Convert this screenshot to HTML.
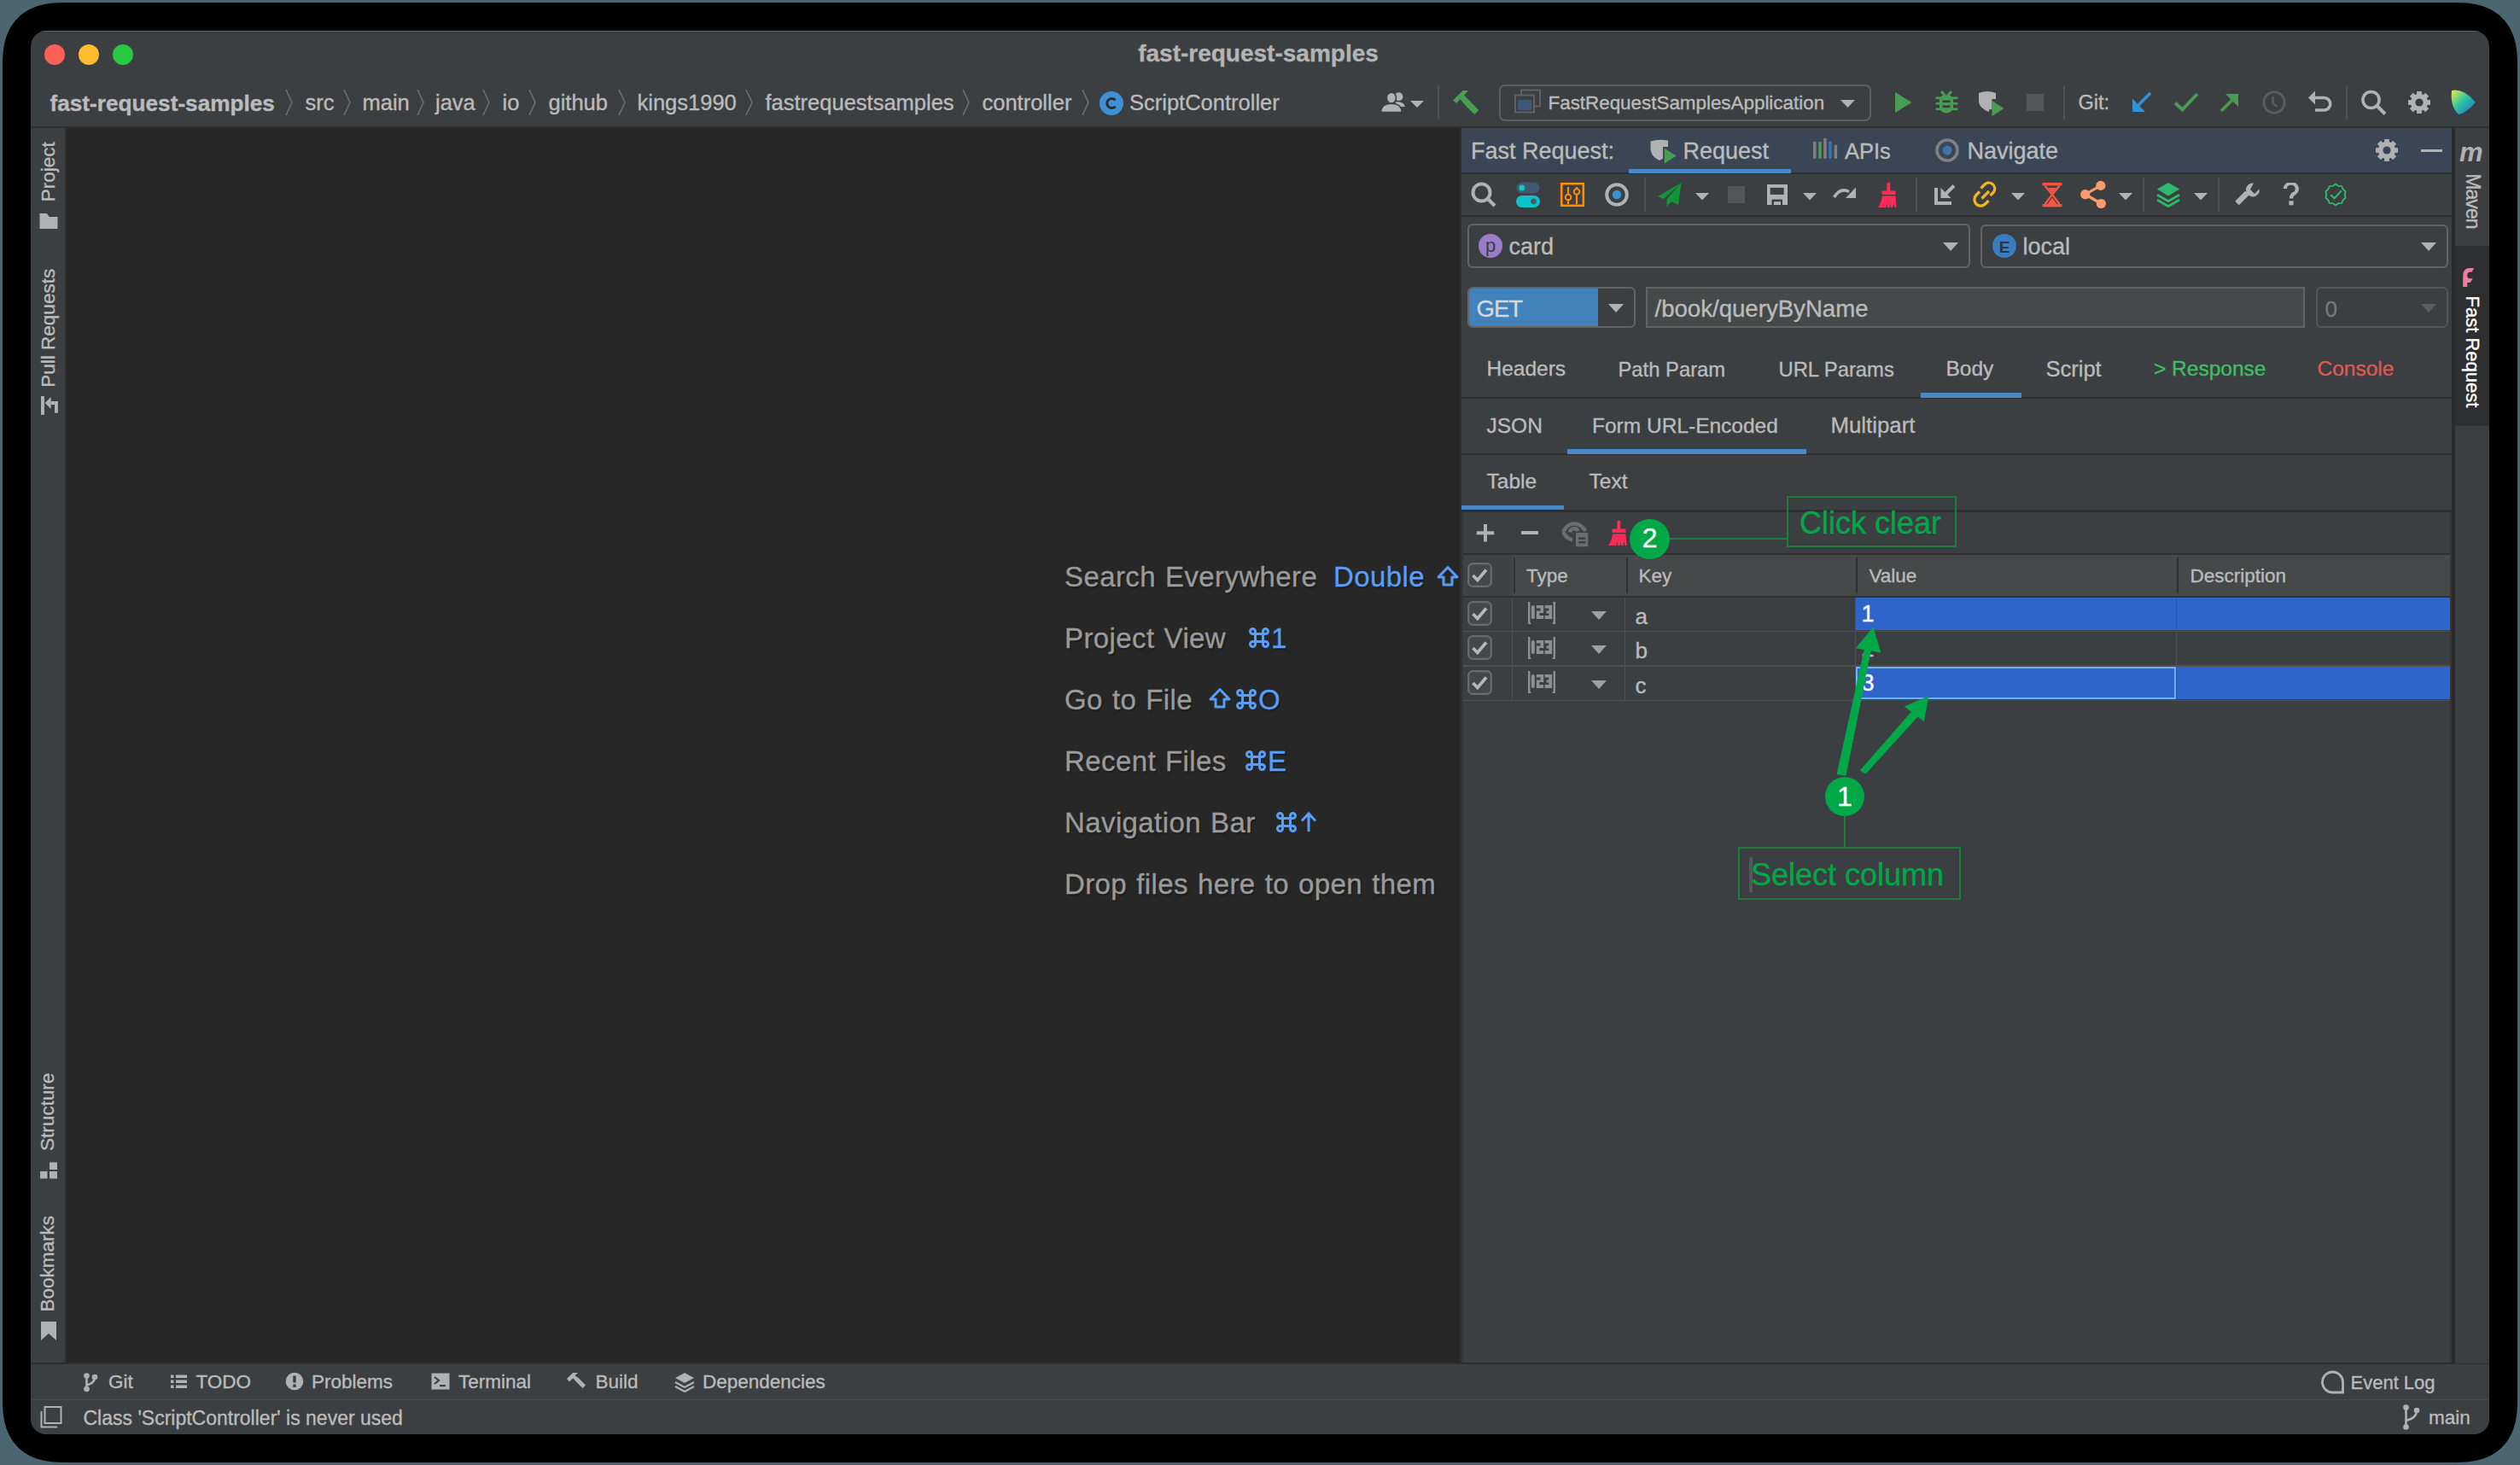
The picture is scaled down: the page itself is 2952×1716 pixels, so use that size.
<!DOCTYPE html>
<html><head><meta charset="utf-8"><style>
html,body{margin:0;padding:0;}
body{width:2952px;height:1716px;position:relative;overflow:hidden;background:#4b6670;font-family:"Liberation Sans", sans-serif;}
.r{position:absolute;display:block;}
.t{position:absolute;line-height:1;white-space:pre;font-family:"Liberation Sans", sans-serif;-webkit-text-stroke:0.35px currentColor;}
</style></head><body>
<svg class="r" style="left:0;top:0" width="2952" height="1716" viewBox="0 0 2952 1716"><path d="M2875.00 3.00 L2883.35 3.13 L2889.51 3.51 L2895.02 4.14 L2900.10 5.02 L2904.85 6.16 L2909.32 7.54 L2913.53 9.17 L2917.50 11.04 L2921.24 13.16 L2924.75 15.51 L2928.03 18.10 L2931.08 20.92 L2933.90 23.97 L2936.49 27.25 L2938.84 30.76 L2940.96 34.50 L2942.83 38.47 L2944.46 42.68 L2945.84 47.15 L2946.98 51.90 L2947.86 56.98 L2948.49 62.49 L2948.87 68.65 L2949.00 77.00 L2949.00 1639.00 L2948.87 1647.35 L2948.49 1653.51 L2947.86 1659.02 L2946.98 1664.10 L2945.84 1668.85 L2944.46 1673.32 L2942.83 1677.53 L2940.96 1681.50 L2938.84 1685.24 L2936.49 1688.75 L2933.90 1692.03 L2931.08 1695.08 L2928.03 1697.90 L2924.75 1700.49 L2921.24 1702.84 L2917.50 1704.96 L2913.53 1706.83 L2909.32 1708.46 L2904.85 1709.84 L2900.10 1710.98 L2895.02 1711.86 L2889.51 1712.49 L2883.35 1712.87 L2875.00 1713.00 L77.00 1713.00 L68.65 1712.87 L62.49 1712.49 L56.98 1711.86 L51.90 1710.98 L47.15 1709.84 L42.68 1708.46 L38.47 1706.83 L34.50 1704.96 L30.76 1702.84 L27.25 1700.49 L23.97 1697.90 L20.92 1695.08 L18.10 1692.03 L15.51 1688.75 L13.16 1685.24 L11.04 1681.50 L9.17 1677.53 L7.54 1673.32 L6.16 1668.85 L5.02 1664.10 L4.14 1659.02 L3.51 1653.51 L3.13 1647.35 L3.00 1639.00 L3.00 77.00 L3.13 68.65 L3.51 62.49 L4.14 56.98 L5.02 51.90 L6.16 47.15 L7.54 42.68 L9.17 38.47 L11.04 34.50 L13.16 30.76 L15.51 27.25 L18.10 23.97 L20.92 20.92 L23.97 18.10 L27.25 15.51 L30.76 13.16 L34.50 11.04 L38.47 9.17 L42.68 7.54 L47.15 6.16 L51.90 5.02 L56.98 4.14 L62.49 3.51 L68.65 3.13 L77.00 3.00Z" fill="#000"/></svg>
<div class="r" style="left:0;top:0;width:2952px;height:1716px;clip-path:inset(36px 36px 36px 36px round 18px)">
<div class="r" style="left:36.0px;top:36.0px;width:2880.0px;height:1644.0px;background:#3c3f41;border-radius:18px;overflow:hidden"></div>
<div class="r" style="left:36.0px;top:36.0px;width:2880.0px;height:1.2px;background:#5d5f61;border-radius:18px 18px 0 0"></div>
<div class="r" style="left:52.0px;top:52.0px;width:24.0px;height:24.0px;background:#ff5f57;border-radius:50%"></div>
<div class="r" style="left:92.0px;top:52.0px;width:24.0px;height:24.0px;background:#febc2e;border-radius:50%"></div>
<div class="r" style="left:132.0px;top:52.0px;width:24.0px;height:24.0px;background:#28c840;border-radius:50%"></div>
<div class="t" style="left:1174px;top:48.6px;width:600px;text-align:center;font-size:28px;font-weight:700;color:#b4b4b4">fast-request-samples</div>
<div class="t" style="left:58.5px;top:107.5px;font-size:26.2px;color:#bbbbbb;font-weight:700;">fast-request-samples</div>
<div class="t" style="left:357.5px;top:108.1px;font-size:25.5px;color:#bbbbbb;font-weight:400;">src</div>
<div class="t" style="left:424.5px;top:108.1px;font-size:25.5px;color:#bbbbbb;font-weight:400;">main</div>
<div class="t" style="left:510.0px;top:108.1px;font-size:25.5px;color:#bbbbbb;font-weight:400;">java</div>
<div class="t" style="left:588.5px;top:108.1px;font-size:25.5px;color:#bbbbbb;font-weight:400;">io</div>
<div class="t" style="left:642.5px;top:108.1px;font-size:25.5px;color:#bbbbbb;font-weight:400;">github</div>
<div class="t" style="left:746.5px;top:108.1px;font-size:25.5px;color:#bbbbbb;font-weight:400;">kings1990</div>
<div class="t" style="left:896.5px;top:108.1px;font-size:25.5px;color:#bbbbbb;font-weight:400;">fastrequestsamples</div>
<div class="t" style="left:1150.5px;top:108.1px;font-size:25.5px;color:#bbbbbb;font-weight:400;">controller</div>
<div class="t" style="left:1323.0px;top:108.1px;font-size:25.5px;color:#bbbbbb;font-weight:400;">ScriptController</div>
<svg class="r" style="left:333px;top:104px;" width="12" height="32" viewBox="0 0 12 32"><path d="M2 1 L9 16 L2 31" stroke="#6c6e70" stroke-width="1.6" fill="none"/></svg>
<svg class="r" style="left:401px;top:104px;" width="12" height="32" viewBox="0 0 12 32"><path d="M2 1 L9 16 L2 31" stroke="#6c6e70" stroke-width="1.6" fill="none"/></svg>
<svg class="r" style="left:487px;top:104px;" width="12" height="32" viewBox="0 0 12 32"><path d="M2 1 L9 16 L2 31" stroke="#6c6e70" stroke-width="1.6" fill="none"/></svg>
<svg class="r" style="left:564px;top:104px;" width="12" height="32" viewBox="0 0 12 32"><path d="M2 1 L9 16 L2 31" stroke="#6c6e70" stroke-width="1.6" fill="none"/></svg>
<svg class="r" style="left:618px;top:104px;" width="12" height="32" viewBox="0 0 12 32"><path d="M2 1 L9 16 L2 31" stroke="#6c6e70" stroke-width="1.6" fill="none"/></svg>
<svg class="r" style="left:723px;top:104px;" width="12" height="32" viewBox="0 0 12 32"><path d="M2 1 L9 16 L2 31" stroke="#6c6e70" stroke-width="1.6" fill="none"/></svg>
<svg class="r" style="left:872px;top:104px;" width="12" height="32" viewBox="0 0 12 32"><path d="M2 1 L9 16 L2 31" stroke="#6c6e70" stroke-width="1.6" fill="none"/></svg>
<svg class="r" style="left:1126px;top:104px;" width="12" height="32" viewBox="0 0 12 32"><path d="M2 1 L9 16 L2 31" stroke="#6c6e70" stroke-width="1.6" fill="none"/></svg>
<svg class="r" style="left:1266px;top:104px;" width="12" height="32" viewBox="0 0 12 32"><path d="M2 1 L9 16 L2 31" stroke="#6c6e70" stroke-width="1.6" fill="none"/></svg>
<svg class="r" style="left:1287px;top:106px;" width="30" height="30" viewBox="0 0 30 30"><circle cx="15" cy="15" r="14" fill="#3f8fd2"/><path d="M19.5 11.2 A5.6 5.6 0 1 0 19.5 18.8" stroke="#2b2b2b" stroke-width="3" fill="none"/></svg>
<div class="r" style="left:36.0px;top:147.9px;width:2880.0px;height:2.2px;background:#303030;"></div>
<svg class="r" style="left:1616px;top:104px;" width="32" height="30" viewBox="0 0 32 30"><g fill="#afb1b3"><circle cx="22.5" cy="9.2" r="4.9"/><path d="M18 15.5 Q28.5 14.5 30 21 H22Z"/></g><g fill="#afb1b3" stroke="#3c3f41" stroke-width="1.6"><ellipse cx="13.9" cy="10.6" rx="5.6" ry="6.5"/><path d="M1.6 27.5 Q1.6 17.8 13.9 17.3 Q26.2 17.8 26.2 27.5Z"/></g></svg>
<svg class="r" style="left:1652.0px;top:118.0px" width="16" height="8" viewBox="0 0 16 8"><path d="M0 0H16L8.0 8Z" fill="#afb1b3"/></svg>
<div class="r" style="left:1684.0px;top:100.0px;width:2.0px;height:39.0px;background:#4f5254;"></div>
<svg class="r" style="left:1700px;top:104px;" width="34" height="32" viewBox="0 0 34 32"><path d="M2 13.4 L13.6 2 L20 2.2 L15.2 7.4 L21.8 14.3 L32.3 25.1 L27.3 30 L17.3 20.2 L10.4 12 L6.3 17 Z" fill="#499c54"/></svg>
<div class="r" style="left:1756.0px;top:98.6px;width:436.0px;height:43.0px;background:transparent;border:2px solid #5e6163;border-radius:7px;box-sizing:border-box"></div>
<svg class="r" style="left:1774px;top:104px;" width="32" height="30" viewBox="0 0 32 30"><rect x="8" y="1.5" width="22" height="19" fill="none" stroke="#5f6163" stroke-width="2"/><rect x="1" y="7.5" width="22" height="20" fill="#3c3f41" stroke="#5f6163" stroke-width="2"/><rect x="4" y="13" width="16" height="12" fill="#40577a"/></svg>
<div class="t" style="left:1813.5px;top:110.2px;font-size:22.4px;color:#bbbbbb;font-weight:400;">FastRequestSamplesApplication</div>
<svg class="r" style="left:2155.5px;top:116.5px" width="17" height="9" viewBox="0 0 17 9"><path d="M0 0H17L8.5 9Z" fill="#afb1b3"/></svg>
<svg class="r" style="left:2218px;top:106px;" width="24" height="28" viewBox="0 0 24 28"><path d="M2 2 V26 L21.5 14Z" fill="#499c54"/></svg>
<svg class="r" style="left:2266px;top:104px;" width="28" height="32" viewBox="0 0 28 32"><path d="M8 3 L12 7.5 M20 3 L16 7.5" stroke="#499c54" stroke-width="3.2"/><path d="M6 10 Q14 4 22 10 V24 Q14 33 6 24Z" fill="#499c54"/><rect x="1.5" y="9.5" width="26" height="2.6" fill="#499c54"/><rect x="1.5" y="16" width="26" height="2.6" fill="#499c54"/><rect x="1.5" y="22.5" width="26" height="2.6" fill="#499c54"/><rect x="9.5" y="13.5" width="9" height="2.6" fill="#3c3f41"/><rect x="9.5" y="19.5" width="9" height="2.6" fill="#3c3f41"/></svg>
<svg class="r" style="left:2316px;top:106px;" width="34" height="32" viewBox="0 0 34 32"><path d="M2 3 Q12 -1 22 3 V10 H17.5 V21 Q17 23 14 22 V25 Q10 24 8 22 Q2 18 2 12Z" fill="#afb1b3"/><path d="M17.5 12 V30 L31.5 21Z" fill="#499c54"/></svg>
<div class="r" style="left:2374.0px;top:110.0px;width:20.0px;height:20.0px;background:#545658;"></div>
<div class="r" style="left:2416.5px;top:101.0px;width:2.0px;height:39.0px;background:#4f5254;"></div>
<div class="t" style="left:2434.5px;top:109.3px;font-size:23.5px;color:#bbbbbb;font-weight:400;">Git:</div>
<svg class="r" style="left:2495px;top:106px;" width="28" height="28" viewBox="0 0 28 28"><path d="M24 3 L5 22" stroke="#3592d4" stroke-width="3.6"/><path d="M3 9.5 V25 H18 Z" fill="#3592d4"/></svg>
<svg class="r" style="left:2545px;top:106px;" width="32" height="26" viewBox="0 0 32 26"><path d="M3 14.5 L11.5 22.5 L29 4" stroke="#499c54" stroke-width="4" fill="none"/></svg>
<svg class="r" style="left:2598px;top:106px;" width="28" height="28" viewBox="0 0 28 28"><path d="M4 24 L22 6" stroke="#499c54" stroke-width="3.6"/><path d="M24 4 V19 L9 4Z" fill="#499c54"/></svg>
<svg class="r" style="left:2649px;top:105px;" width="30" height="30" viewBox="0 0 30 30"><circle cx="15" cy="15" r="12.2" stroke="#5a5c5e" stroke-width="3" fill="none"/><path d="M13.5 8 V16 L18.5 20" stroke="#5a5c5e" stroke-width="2.6" fill="none"/></svg>
<svg class="r" style="left:2702px;top:105px;" width="32" height="30" viewBox="0 0 32 30"><path d="M2 9.5 L10 1.5 V17.5Z" fill="#afb1b3"/><path d="M9 9.5 H20.5 A7.2 7.2 0 0 1 20.5 24 H10" stroke="#afb1b3" stroke-width="3.6" fill="none"/></svg>
<div class="r" style="left:2748.0px;top:101.0px;width:2.0px;height:39.0px;background:#4f5254;"></div>
<svg class="r" style="left:2764px;top:104px;" width="34" height="32" viewBox="0 0 34 32"><circle cx="13.5" cy="13" r="9.6" stroke="#afb1b3" stroke-width="3.5" fill="none"/><path d="M20.5 20 L30 29.5" stroke="#afb1b3" stroke-width="4" /></svg>
<svg class="r" style="left:2818px;top:104px;" width="32" height="32" viewBox="0 0 32 32"><circle cx="16" cy="16" r="10.14" fill="#afb1b3"/><rect x="13.14" y="3" width="5.72" height="26" fill="#afb1b3" transform="rotate(0 16 16)"/><rect x="13.14" y="3" width="5.72" height="26" fill="#afb1b3" transform="rotate(45 16 16)"/><rect x="13.14" y="3" width="5.72" height="26" fill="#afb1b3" transform="rotate(90 16 16)"/><rect x="13.14" y="3" width="5.72" height="26" fill="#afb1b3" transform="rotate(135 16 16)"/><circle cx="16" cy="16" r="4.6" fill="#3c3f41"/></svg>
<svg class="r" style="left:2868px;top:103px;" width="36" height="34" viewBox="0 0 36 34"><defs><linearGradient id="lg" x1="0" y1="0" x2="1" y2="1"><stop offset="0" stop-color="#e9f04a"/><stop offset="0.45" stop-color="#2fc6a0"/><stop offset="1" stop-color="#1f5fd9"/></linearGradient></defs><path d="M4 3 Q18 0 32 17 Q20 30 12 31 Q2 22 4 3Z" fill="url(#lg)"/></svg>
<div class="r" style="left:36.0px;top:149.5px;width:40.5px;height:1447.0px;background:#3c3f41;"></div>
<div class="r" style="left:76.0px;top:149.5px;width:2.2px;height:1447.0px;background:#2f2f2f;"></div>
<div class="r" style="left:78.2px;top:150.0px;width:1632.0px;height:1446.0px;background:#272727;"></div>
<div class="t" style="left:16.5px;top:189.6px;width:80px;height:22.5px;text-align:center;font-size:22.5px;color:#bbbbbb;font-weight:400;transform:rotate(-90deg);transform-origin:50% 50%">Project</div>
<div class="t" style="left:-18.5px;top:372.6px;width:150px;height:22.5px;text-align:center;font-size:22.5px;color:#bbbbbb;font-weight:400;transform:rotate(-90deg);transform-origin:50% 50%">Pull Requests</div>
<div class="t" style="left:1.0px;top:1290.7px;width:110px;height:22.5px;text-align:center;font-size:22.5px;color:#bbbbbb;font-weight:400;transform:rotate(-90deg);transform-origin:50% 50%">Structure</div>
<div class="t" style="left:-9.0px;top:1468.5px;width:130px;height:22.5px;text-align:center;font-size:22.5px;color:#bbbbbb;font-weight:400;transform:rotate(-90deg);transform-origin:50% 50%">Bookmarks</div>
<svg class="r" style="left:45px;top:249px;" width="24" height="20" viewBox="0 0 24 20"><path d="M1.5 1 H10 L12.5 5 H22.5 V19 H1.5Z" fill="#afb1b3"/></svg>
<svg class="r" style="left:45px;top:462px;" width="26" height="26" viewBox="0 0 26 26"><g fill="#afb1b3"><rect x="3" y="2" width="3.9" height="21.9"/><path d="M7.5 9.9 L14.7 3 V16.9Z"/><path d="M14.7 8 H22.9 V21.8 H19 V12.1 H14.7Z"/></g></svg>
<svg class="r" style="left:45px;top:1359px;" width="24" height="24" viewBox="0 0 24 24"><rect x="2" y="13" width="8.5" height="8.5" fill="#afb1b3"/><rect x="13" y="2.5" width="9" height="8.5" fill="#afb1b3"/><rect x="13" y="13" width="9" height="8.5" fill="#afb1b3"/></svg>
<svg class="r" style="left:45px;top:1546px;" width="24" height="26" viewBox="0 0 24 26"><path d="M3 2 H21 V24 L12 16 L3 24Z" fill="#afb1b3"/></svg>
<div class="t" style="left:1247.0px;top:659.4px;font-size:33px;color:#9a9a9a;font-weight:400;text-shadow:1.5px 1.5px 1px #1c1c1c;letter-spacing:0.4px;word-spacing:1.5px">Search Everywhere</div>
<div class="t" style="left:1562.0px;top:659.4px;font-size:33px;color:#589df6;font-weight:400;text-shadow:1.5px 1.5px 1px #1c1c1c;letter-spacing:0.4px;word-spacing:1.5px">Double</div>
<svg class="r" style="left:1682px;top:662px;" width="28" height="26" viewBox="0 0 28 26"><path d="M14 2.5 L25 14 H19 V23 H9 V14 H3Z" stroke="#589df6" stroke-width="3" fill="none" stroke-linejoin="round"/></svg>
<div class="t" style="left:1247.0px;top:730.7px;font-size:33px;color:#9a9a9a;font-weight:400;text-shadow:1.5px 1.5px 1px #1c1c1c;letter-spacing:0.4px;word-spacing:1.5px">Project View</div>
<svg class="r" style="left:1462px;top:734px;" width="26" height="26" viewBox="0 0 26 26"><g stroke="#589df6" stroke-width="3" fill="none"><path d="M8.5 8.5 H17.5 V17.5 H8.5Z"/><path d="M8.5 8.5 H5.5 A3 3 0 1 1 8.5 5.5 Z"/><path d="M17.5 8.5 V5.5 A3 3 0 1 1 20.5 8.5Z"/><path d="M17.5 17.5 H20.5 A3 3 0 1 1 17.5 20.5Z"/><path d="M8.5 17.5 V20.5 A3 3 0 1 1 5.5 17.5Z"/></g></svg>
<div class="t" style="left:1489.0px;top:730.7px;font-size:33px;color:#589df6;font-weight:400;text-shadow:1.5px 1.5px 1px #1c1c1c;letter-spacing:0.4px;word-spacing:1.5px">1</div>
<div class="t" style="left:1247.0px;top:802.8px;font-size:33px;color:#9a9a9a;font-weight:400;text-shadow:1.5px 1.5px 1px #1c1c1c;letter-spacing:0.4px;word-spacing:1.5px">Go to File</div>
<svg class="r" style="left:1415px;top:805px;" width="28" height="26" viewBox="0 0 28 26"><path d="M14 2.5 L25 14 H19 V23 H9 V14 H3Z" stroke="#589df6" stroke-width="3" fill="none" stroke-linejoin="round"/></svg>
<svg class="r" style="left:1447px;top:806px;" width="26" height="26" viewBox="0 0 26 26"><g stroke="#589df6" stroke-width="3" fill="none"><path d="M8.5 8.5 H17.5 V17.5 H8.5Z"/><path d="M8.5 8.5 H5.5 A3 3 0 1 1 8.5 5.5 Z"/><path d="M17.5 8.5 V5.5 A3 3 0 1 1 20.5 8.5Z"/><path d="M17.5 17.5 H20.5 A3 3 0 1 1 17.5 20.5Z"/><path d="M8.5 17.5 V20.5 A3 3 0 1 1 5.5 17.5Z"/></g></svg>
<div class="t" style="left:1474.0px;top:802.8px;font-size:33px;color:#589df6;font-weight:400;text-shadow:1.5px 1.5px 1px #1c1c1c;letter-spacing:0.4px;word-spacing:1.5px">O</div>
<div class="t" style="left:1247.0px;top:875.0px;font-size:33px;color:#9a9a9a;font-weight:400;text-shadow:1.5px 1.5px 1px #1c1c1c;letter-spacing:0.4px;word-spacing:1.5px">Recent Files</div>
<svg class="r" style="left:1458px;top:878px;" width="26" height="26" viewBox="0 0 26 26"><g stroke="#589df6" stroke-width="3" fill="none"><path d="M8.5 8.5 H17.5 V17.5 H8.5Z"/><path d="M8.5 8.5 H5.5 A3 3 0 1 1 8.5 5.5 Z"/><path d="M17.5 8.5 V5.5 A3 3 0 1 1 20.5 8.5Z"/><path d="M17.5 17.5 H20.5 A3 3 0 1 1 17.5 20.5Z"/><path d="M8.5 17.5 V20.5 A3 3 0 1 1 5.5 17.5Z"/></g></svg>
<div class="t" style="left:1485.0px;top:875.0px;font-size:33px;color:#589df6;font-weight:400;text-shadow:1.5px 1.5px 1px #1c1c1c;letter-spacing:0.4px;word-spacing:1.5px">E</div>
<div class="t" style="left:1247.0px;top:946.6px;font-size:33px;color:#9a9a9a;font-weight:400;text-shadow:1.5px 1.5px 1px #1c1c1c;letter-spacing:0.4px;word-spacing:1.5px">Navigation Bar</div>
<svg class="r" style="left:1494px;top:950px;" width="26" height="26" viewBox="0 0 26 26"><g stroke="#589df6" stroke-width="3" fill="none"><path d="M8.5 8.5 H17.5 V17.5 H8.5Z"/><path d="M8.5 8.5 H5.5 A3 3 0 1 1 8.5 5.5 Z"/><path d="M17.5 8.5 V5.5 A3 3 0 1 1 20.5 8.5Z"/><path d="M17.5 17.5 H20.5 A3 3 0 1 1 17.5 20.5Z"/><path d="M8.5 17.5 V20.5 A3 3 0 1 1 5.5 17.5Z"/></g></svg>
<svg class="r" style="left:1522px;top:950px;" width="22" height="26" viewBox="0 0 22 26"><path d="M11 24 V4 M3 11.5 L11 3 L19 11.5" stroke="#589df6" stroke-width="3" fill="none"/></svg>
<div class="t" style="left:1247.0px;top:1019.2px;font-size:33px;color:#9a9a9a;font-weight:400;text-shadow:1.5px 1.5px 1px #1c1c1c;letter-spacing:0.4px;word-spacing:1.5px">Drop files here to open them</div>
<div class="r" style="left:36.0px;top:1595.5px;width:2880.0px;height:2.2px;background:#2f2f2f;"></div>
<div class="r" style="left:36.0px;top:1597.5px;width:2880.0px;height:41.0px;background:#3c3f41;"></div>
<div class="r" style="left:36.0px;top:1638.5px;width:2880.0px;height:1.2px;background:#4a4948;"></div>
<svg class="r" style="left:97px;top:1607px;" width="20" height="25" viewBox="0 0 20 25"><g fill="#afb1b3"><circle cx="4.5" cy="4.5" r="3.3"/><circle cx="14" cy="6" r="3.3"/><circle cx="4.5" cy="20" r="3.3"/></g><path d="M4.5 4.5 V20 M14 6 Q14 13 4.5 15.5" stroke="#afb1b3" stroke-width="2.6" fill="none"/></svg>
<div class="t" style="left:127.0px;top:1608.4px;font-size:22.5px;color:#bbbbbb;font-weight:400;">Git</div>
<svg class="r" style="left:199px;top:1609px;" width="22" height="19" viewBox="0 0 22 19"><g fill="#afb1b3"><rect x="1" y="1.5" width="3.5" height="3.5"/><rect x="1" y="7.5" width="3.5" height="3.5"/><rect x="1" y="13.5" width="3.5" height="3.5"/><rect x="7" y="1.5" width="13" height="3.5"/><rect x="7" y="7.5" width="13" height="3.5"/><rect x="7" y="13.5" width="13" height="3.5"/></g></svg>
<div class="t" style="left:229.5px;top:1608.4px;font-size:22.5px;color:#bbbbbb;font-weight:400;">TODO</div>
<svg class="r" style="left:334px;top:1607px;" width="22" height="22" viewBox="0 0 22 22"><circle cx="11" cy="11" r="10.3" fill="#afb1b3"/><rect x="9.3" y="4.5" width="3.4" height="8" fill="#3c3f41"/><rect x="9.3" y="14.5" width="3.4" height="3.4" fill="#3c3f41"/></svg>
<div class="t" style="left:365.0px;top:1608.4px;font-size:22.5px;color:#bbbbbb;font-weight:400;">Problems</div>
<svg class="r" style="left:505px;top:1608px;" width="22" height="20" viewBox="0 0 22 20"><rect x="0.5" y="0.5" width="21" height="19" fill="#afb1b3"/><path d="M4 5 L9 9 L4 13" stroke="#3c3f41" stroke-width="2.2" fill="none"/><rect x="10" y="14" width="7" height="2.2" fill="#3c3f41"/></svg>
<div class="t" style="left:537.0px;top:1608.4px;font-size:22.5px;color:#bbbbbb;font-weight:400;">Terminal</div>
<svg class="r" style="left:662px;top:1606px;" width="26" height="26" viewBox="0 0 26 26"><path d="M2 9 L9 2 H15 L11.5 5 L13 6.5 L15.5 8 L24 16.5 L20.5 20 L12 11.5 L10.5 9.5 L9 8.5 L5 12.5Z" fill="#afb1b3"/></svg>
<div class="t" style="left:697.5px;top:1608.4px;font-size:22.5px;color:#bbbbbb;font-weight:400;">Build</div>
<svg class="r" style="left:789px;top:1606px;" width="26" height="26" viewBox="0 0 26 26"><path d="M13 2 L24 8 L13 14 L2 8Z" fill="#afb1b3"/><path d="M2 13 L13 19 L24 13 M2 18 L13 24 L24 18" stroke="#afb1b3" stroke-width="2.4" fill="none"/></svg>
<div class="t" style="left:823.0px;top:1608.4px;font-size:22.5px;color:#bbbbbb;font-weight:400;">Dependencies</div>
<svg class="r" style="left:2719px;top:1605px;" width="28" height="28" viewBox="0 0 28 28"><path d="M13.5 26 A12 12 0 1 1 25.5 14 V26Z" stroke="#afb1b3" stroke-width="2.8" fill="none"/></svg>
<div class="t" style="left:2753.5px;top:1608.8px;font-size:22px;color:#bbbbbb;font-weight:400;">Event Log</div>
<div class="r" style="left:36.0px;top:1639.7px;width:2880.0px;height:40.3px;background:#3c3f41;"></div>
<svg class="r" style="left:46px;top:1646px;" width="28" height="28" viewBox="0 0 28 28"><rect x="6.5" y="2" width="19" height="19" stroke="#afb1b3" stroke-width="2" fill="none"/><path d="M2.5 7 V25.5 H21" stroke="#afb1b3" stroke-width="2" fill="none"/></svg>
<div class="t" style="left:97.5px;top:1649.9px;font-size:23px;color:#bbbbbb;font-weight:400;">Class 'ScriptController' is never used</div>
<svg class="r" style="left:2814px;top:1644px;" width="24" height="32" viewBox="0 0 24 32"><g fill="#afb1b3"><circle cx="4.5" cy="4.5" r="3.3"/><circle cx="17" cy="8" r="3.3"/><circle cx="4.5" cy="27.5" r="3.3"/></g><path d="M4.5 4.5 V27.5 M17 8 Q17 17 4.5 20" stroke="#afb1b3" stroke-width="2.6" fill="none"/></svg>
<div class="t" style="left:2845.0px;top:1650.3px;font-size:22.5px;color:#bbbbbb;font-weight:400;">main</div>
<div class="r" style="left:2872.0px;top:149.5px;width:4.0px;height:1447.0px;background:#2b2b2b;"></div>
<div class="r" style="left:2876.0px;top:149.5px;width:40.0px;height:1447.0px;background:#3c3f41;"></div>
<div class="r" style="left:2876.0px;top:288.0px;width:40.0px;height:211.0px;background:#2d2f31;"></div>
<svg class="r" style="left:2878px;top:164px;" width="36" height="28" viewBox="0 0 36 28"><text x="3" y="24.5" font-family="Liberation Sans" font-size="31" font-style="italic" font-weight="700" fill="#afb1b3" letter-spacing="-1">m</text></svg>
<div class="t" style="left:2855.5px;top:223.8px;width:80px;height:23px;text-align:center;font-size:23px;letter-spacing:-0.9px;color:#bbbbbb;transform:rotate(90deg);transform-origin:50% 50%">Maven</div>
<svg class="r" style="left:2882px;top:312px;" width="20" height="26" viewBox="0 0 20 26"><path d="M3.2 24 V11 Q3.2 2 11 2 H16.2 L13.8 6.4 H12.5 Q8.2 6.4 8.2 10.5 Q8.2 14.3 11 14.3 H14.8 L11.7 19 H8.2 V24 Z" fill="#f07ca2"/></svg>
<div class="t" style="left:2826.0px;top:400.5px;width:140px;height:22px;text-align:center;font-size:22px;color:#ffffff;font-weight:400;transform:rotate(90deg);transform-origin:50% 50%">Fast Request</div>
<div class="r" style="left:1710.0px;top:149.5px;width:2.0px;height:1447.0px;background:#2f2f2f;"></div>
<div class="r" style="left:1712.0px;top:150.0px;width:1160.0px;height:1446.0px;background:#3c3f41;"></div>
<div class="r" style="left:1712.0px;top:150.0px;width:1160.0px;height:51.8px;background:#3a4655;"></div>
<div class="r" style="left:1712.0px;top:202.0px;width:1160.0px;height:2.0px;background:#2f2f2f;"></div>
<div class="t" style="left:1723.0px;top:163.8px;font-size:27px;color:#bbbbbb;font-weight:400;">Fast Request:</div>
<svg class="r" style="left:1931px;top:160px;" width="36" height="34" viewBox="0 0 36 34"><path d="M2.5 5.5 Q12 2.5 23 4.5 V12 H17 V25.5 L13 28 Q2.5 23.5 2.5 14Z" fill="#afb1b3"/><path d="M18.8 13.8 V31.6 L32.7 22.5Z" fill="#499c54"/></svg>
<div class="t" style="left:1971.5px;top:163.8px;font-size:27px;color:#bbbbbb;font-weight:400;">Request</div>
<div class="r" style="left:1908.0px;top:198.0px;width:190.0px;height:5.0px;background:#4a88c7;"></div>
<svg class="r" style="left:2122px;top:160px;" width="32" height="28" viewBox="0 0 32 28"><rect x="2" y="5.9" width="3.5" height="19.8" fill="#808080"/><rect x="8.3" y="5.9" width="3.5" height="19.8" fill="#4e9a56"/><rect x="14.2" y="1.9" width="3.5" height="23.8" fill="#808080"/><rect x="20.2" y="5.9" width="3.5" height="19.8" fill="#3874b0"/><rect x="26.6" y="9.8" width="3.5" height="15.9" fill="#808080"/></svg>
<div class="t" style="left:2161.0px;top:165.0px;font-size:25.5px;color:#bbbbbb;font-weight:400;">APIs</div>
<svg class="r" style="left:2266px;top:161px;" width="32" height="30" viewBox="0 0 32 30"><circle cx="15" cy="15" r="12" stroke="#7f8183" stroke-width="3.6" fill="none"/><circle cx="15" cy="15" r="5.6" fill="#3f74aa"/></svg>
<div class="t" style="left:2304.5px;top:163.8px;font-size:27px;color:#bbbbbb;font-weight:400;">Navigate</div>
<svg class="r" style="left:2780px;top:160px;" width="32" height="32" viewBox="0 0 32 32"><circle cx="16" cy="16" r="10.14" fill="#afb1b3"/><rect x="13.14" y="3" width="5.72" height="26" fill="#afb1b3" transform="rotate(0 16 16)"/><rect x="13.14" y="3" width="5.72" height="26" fill="#afb1b3" transform="rotate(45 16 16)"/><rect x="13.14" y="3" width="5.72" height="26" fill="#afb1b3" transform="rotate(90 16 16)"/><rect x="13.14" y="3" width="5.72" height="26" fill="#afb1b3" transform="rotate(135 16 16)"/><circle cx="16" cy="16" r="4.6" fill="#3a4655"/></svg>
<div class="r" style="left:2835.5px;top:174.5px;width:25.0px;height:3.2px;background:#afb1b3;"></div>
<div class="r" style="left:1712.0px;top:252.0px;width:1160.0px;height:2.0px;background:#2f2f2f;"></div>
<svg class="r" style="left:1720px;top:210px;" width="36" height="36" viewBox="0 0 36 36"><circle cx="15.5" cy="15.5" r="10" stroke="#afb1b3" stroke-width="4" fill="none"/><path d="M22.5 22.5 L31 31" stroke="#afb1b3" stroke-width="4.2"/></svg>
<svg class="r" style="left:1774px;top:211px;" width="32" height="34" viewBox="0 0 32 34"><rect x="2.5" y="2.5" width="27" height="13" rx="6.5" fill="#3f5a73"/><circle cx="8.8" cy="9" r="3.4" fill="#14c2c9"/><rect x="2" y="18" width="28" height="14" rx="7" fill="#0cc3c9"/><circle cx="22.5" cy="24.8" r="3.4" fill="#3f5a73"/></svg>
<svg class="r" style="left:1826px;top:212px;" width="32" height="32" viewBox="0 0 32 32"><rect x="3.2" y="3.2" width="25.6" height="25.6" stroke="#ff8c00" stroke-width="2.6" fill="none"/><path d="M11 7 V27 M21 7 V27" stroke="#ff8c00" stroke-width="2.2"/><circle cx="11" cy="19" r="3.3" fill="#3c3f41" stroke="#ff8c00" stroke-width="2"/><circle cx="21" cy="12.5" r="3.3" fill="#3c3f41" stroke="#ff8c00" stroke-width="2"/></svg>
<svg class="r" style="left:1878px;top:212px;" width="32" height="32" viewBox="0 0 32 32"><circle cx="16" cy="16" r="11.8" stroke="#afb1b3" stroke-width="4" fill="none"/><circle cx="16" cy="16" r="5.3" fill="#3592d4"/></svg>
<div class="r" style="left:1926.0px;top:208.0px;width:2.0px;height:40.0px;background:#4f5254;"></div>
<svg class="r" style="left:1940px;top:212px;" width="32" height="32" viewBox="0 0 32 32"><path d="M29.5 2 L2 18 L9 21 Z" fill="#109638"/><path d="M29.5 2 L12.5 21 L12.5 30 L18 24 L26 28Z" fill="#109638"/></svg>
<svg class="r" style="left:1986.0px;top:225.8px" width="16" height="8.5" viewBox="0 0 16 8.5"><path d="M0 0H16L8.0 8.5Z" fill="#afb1b3"/></svg>
<div class="r" style="left:2024.0px;top:218.0px;width:20.0px;height:20.0px;background:#545658;"></div>
<svg class="r" style="left:2068px;top:214px;" width="28" height="28" viewBox="0 0 28 28"><path d="M2 2 H26 V26 H2Z" fill="#afb1b3"/><rect x="5.7" y="5.9" width="16" height="8" fill="#3c3f41"/><rect x="7.5" y="19.6" width="12.5" height="6.4" fill="#3c3f41"/><rect x="10" y="22.2" width="8" height="3.8" fill="#afb1b3"/></svg>
<svg class="r" style="left:2112.0px;top:225.8px" width="16" height="8.5" viewBox="0 0 16 8.5"><path d="M0 0H16L8.0 8.5Z" fill="#afb1b3"/></svg>
<svg class="r" style="left:2145px;top:213px;" width="32" height="24" viewBox="0 0 32 24"><path d="M3.5 18 Q11 6 21 11.5" stroke="#afb1b3" stroke-width="3.6" fill="none"/><path d="M29 6.5 V19 H17Z" fill="#afb1b3"/></svg>
<svg class="r" style="left:2199px;top:212.5px;" width="26" height="32" viewBox="0 0 26 32"><rect x="11.3" y="0.5" width="4" height="12" rx="2" fill="#ff2a55"/><rect x="5.5" y="10.5" width="16" height="4.5" rx="1" fill="#ff2a55"/><path d="M6 16.5 H21.5 L22.5 30 H20.5 L19.5 25 L18.5 30 H16 L15.5 25 L14.5 30 H12 L11.5 25 L10.5 30 H1 Q5 24 6 16.5Z" fill="#ff2a55"/></svg>
<div class="r" style="left:2244.0px;top:208.0px;width:2.0px;height:40.0px;background:#4f5254;"></div>
<svg class="r" style="left:2264px;top:214px;" width="30" height="30" viewBox="0 0 30 30"><path d="M2 6 H6 V22 H22 V26 H2Z" fill="#afb1b3"/><path d="M25 3.5 L13 15.5" stroke="#afb1b3" stroke-width="4"/><path d="M9.5 6 V18 H21.5Z" fill="#afb1b3"/></svg>
<svg class="r" style="left:2310px;top:212px;" width="32" height="32" viewBox="0 0 32 32"><g stroke="#f4b51c" stroke-width="3.2" fill="none" stroke-linecap="butt"><path d="M10.5 8.5 L14 5 A5.3 5.3 0 0 1 25.5 13 L21.5 17"/><path d="M19.5 23 L15.5 27 A5.3 5.3 0 0 1 5 16.5 L9 12.5"/><path d="M11.5 20.5 L20 12"/></g></svg>
<svg class="r" style="left:2356.0px;top:225.8px" width="16" height="8.5" viewBox="0 0 16 8.5"><path d="M0 0H16L8.0 8.5Z" fill="#afb1b3"/></svg>
<svg class="r" style="left:2391px;top:212px;" width="26" height="32" viewBox="0 0 26 32"><g fill="#f05545"><rect x="1.5" y="2" width="23" height="3.4"/><rect x="1.5" y="27" width="23" height="3.4"/></g><path d="M4.5 5.4 L13 16 L21.5 5.4 M4.5 27 L13 16 L21.5 27" stroke="#f05545" stroke-width="2.4" fill="none"/><path d="M8 8 H18 L13 14Z M13 19.5 L18.5 27 H7.5Z" fill="#f05545"/></svg>
<svg class="r" style="left:2434px;top:210px;" width="34" height="36" viewBox="0 0 34 36"><g fill="#ff9a6e"><circle cx="26.8" cy="7.4" r="5.6"/><circle cx="8.7" cy="17.7" r="5.6"/><circle cx="27.3" cy="28.5" r="5.6"/></g><path d="M26.8 7.4 L8.7 17.7 L27.3 28.5" stroke="#ff9a6e" stroke-width="3.2" fill="none"/></svg>
<svg class="r" style="left:2482.0px;top:225.8px" width="16" height="8.5" viewBox="0 0 16 8.5"><path d="M0 0H16L8.0 8.5Z" fill="#afb1b3"/></svg>
<div class="r" style="left:2510.0px;top:208.0px;width:2.0px;height:40.0px;background:#4f5254;"></div>
<svg class="r" style="left:2525px;top:212px;" width="30" height="32" viewBox="0 0 30 32"><path d="M1.8 9.5 L15 2 L28.2 9.5 L15 17.6Z" fill="#2dbb6e"/><path d="M2 16.2 L15 23.6 L28 16.2 M2 22 L15 29.6 L28 22" stroke="#2dbb6e" stroke-width="2.8" fill="none"/></svg>
<svg class="r" style="left:2570.0px;top:225.8px" width="16" height="8.5" viewBox="0 0 16 8.5"><path d="M0 0H16L8.0 8.5Z" fill="#afb1b3"/></svg>
<div class="r" style="left:2598.0px;top:208.0px;width:2.0px;height:40.0px;background:#4f5254;"></div>
<svg class="r" style="left:2617px;top:212px;" width="32" height="32" viewBox="0 0 32 32"><path d="M3.5 26 L15.5 14" stroke="#afb1b3" stroke-width="6.5"/><path d="M23 2.5 A8 8 0 1 0 29.8 9.3 L24 15 L19 10Z" fill="#afb1b3"/></svg>
<svg class="r" style="left:2674px;top:214px;" width="20" height="28" viewBox="0 0 20 28"><path d="M2.8 7 A7 6.5 0 1 1 13 13 Q10 14.5 10 18.5" stroke="#afb1b3" stroke-width="4.2" fill="none"/><rect x="7.4" y="21.3" width="5.2" height="5" fill="#afb1b3"/></svg>
<svg class="r" style="left:2722px;top:214px;" width="28" height="28" viewBox="0 0 28 28"><polygon points="14.00,1.70 17.31,3.82 21.23,4.05 22.66,7.71 25.70,10.20 24.70,14.00 25.70,17.80 22.66,20.29 21.23,23.95 17.31,24.18 14.00,26.30 10.69,24.18 6.77,23.95 5.34,20.29 2.30,17.80 3.30,14.00 2.30,10.20 5.34,7.71 6.77,4.05 10.69,3.82" stroke="#2dbb6e" stroke-width="1.8" fill="none" stroke-linejoin="round"/><path d="M8.3 14.2 L12.5 18.3 L20.8 9.5" stroke="#2dbb6e" stroke-width="2" fill="none"/></svg>
<div class="r" style="left:1718.5px;top:262.0px;width:589.0px;height:52.0px;background:transparent;border:2px solid #646464;border-radius:6px;box-sizing:border-box"></div>
<svg class="r" style="left:1731px;top:273px;" width="30" height="30" viewBox="0 0 30 30"><circle cx="15" cy="15" r="14" fill="#9b7cc9"/><text x="15" y="22" text-anchor="middle" font-family="Liberation Sans" font-size="22" fill="#3c3f41">p</text></svg>
<div class="t" style="left:1767.5px;top:275.9px;font-size:27px;color:#bbbbbb;font-weight:400;">card</div>
<svg class="r" style="left:2276.0px;top:283.5px" width="18" height="10" viewBox="0 0 18 10"><path d="M0 0H18L9.0 10Z" fill="#afb1b3"/></svg>
<div class="r" style="left:2320.0px;top:262.5px;width:548.0px;height:51.0px;background:transparent;border:2px solid #646464;border-radius:6px;box-sizing:border-box"></div>
<svg class="r" style="left:2333px;top:273px;" width="30" height="30" viewBox="0 0 30 30"><circle cx="15" cy="15" r="14" fill="#3b7cc0"/><text x="15" y="22.5" text-anchor="middle" font-family="Liberation Sans" font-size="19" font-weight="700" fill="#2b3440">E</text></svg>
<div class="t" style="left:2369.5px;top:275.9px;font-size:27px;color:#bbbbbb;font-weight:400;">local</div>
<svg class="r" style="left:2835.5px;top:284.0px" width="18" height="10" viewBox="0 0 18 10"><path d="M0 0H18L9.0 10Z" fill="#afb1b3"/></svg>
<div class="r" style="left:1718.5px;top:336.0px;width:197.0px;height:47.5px;background:transparent;border:2px solid #646464;border-radius:6px;box-sizing:border-box"></div>
<div class="r" style="left:1720.5px;top:338.0px;width:151.5px;height:43.5px;background:#4181bc;border-radius:4px 0 0 4px"></div>
<div class="t" style="left:1729.5px;top:348.0px;font-size:27.5px;color:#d4d8dc;font-weight:400;letter-spacing:-1px">GET</div>
<svg class="r" style="left:1884.0px;top:356.0px" width="18" height="10" viewBox="0 0 18 10"><path d="M0 0H18L9.0 10Z" fill="#afb1b3"/></svg>
<div class="r" style="left:1928.0px;top:336.0px;width:772.0px;height:47.5px;background:#45494a;border:2px solid #646464;box-sizing:border-box"></div>
<div class="t" style="left:1938.5px;top:347.9px;font-size:27.6px;color:#bbbbbb;font-weight:400;">/book/queryByName</div>
<div class="r" style="left:2712.5px;top:336.0px;width:155.5px;height:47.5px;background:transparent;border:2px solid #555759;border-radius:6px;box-sizing:border-box"></div>
<div class="t" style="left:2723.5px;top:349.3px;font-size:26px;color:#777777;font-weight:400;">0</div>
<svg class="r" style="left:2835.5px;top:355.5px" width="18" height="10" viewBox="0 0 18 10"><path d="M0 0H18L9.0 10Z" fill="#5b5d5f"/></svg>
<div class="r" style="left:1712.0px;top:464.5px;width:1160.0px;height:2.0px;background:#2f2f2f;"></div>
<div class="t" style="left:1741.5px;top:420.4px;font-size:24.5px;color:#bbbbbb;font-weight:400;">Headers</div>
<div class="t" style="left:1895.5px;top:421.0px;font-size:23.8px;color:#bbbbbb;font-weight:400;">Path Param</div>
<div class="t" style="left:2083.5px;top:421.0px;font-size:23.8px;color:#bbbbbb;font-weight:400;">URL Params</div>
<div class="t" style="left:2279.5px;top:420.4px;font-size:24.5px;color:#bbbbbb;font-weight:400;">Body</div>
<div class="t" style="left:2396.5px;top:419.5px;font-size:25.5px;color:#bbbbbb;font-weight:400;">Script</div>
<div class="t" style="left:2523.0px;top:420.4px;font-size:24.5px;color:#3fbf63;font-weight:400;">&gt; Response</div>
<div class="t" style="left:2714.5px;top:420.4px;font-size:24.5px;color:#df5a4f;font-weight:400;">Console</div>
<div class="r" style="left:2250.0px;top:460.0px;width:118.0px;height:5.5px;background:#4a88c7;"></div>
<div class="r" style="left:1712.0px;top:530.5px;width:1160.0px;height:2.0px;background:#2f2f2f;"></div>
<div class="t" style="left:1741.5px;top:487.1px;font-size:24.5px;color:#bbbbbb;font-weight:400;">JSON</div>
<div class="t" style="left:1865.0px;top:487.1px;font-size:24.5px;color:#bbbbbb;font-weight:400;">Form URL-Encoded</div>
<div class="t" style="left:2144.5px;top:486.0px;font-size:25.8px;color:#bbbbbb;font-weight:400;">Multipart</div>
<div class="r" style="left:1835.7px;top:526.0px;width:280.5px;height:5.5px;background:#4a88c7;"></div>
<div class="t" style="left:1741.5px;top:552.4px;font-size:24.5px;color:#bbbbbb;font-weight:400;">Table</div>
<div class="t" style="left:1861.5px;top:552.4px;font-size:24.5px;color:#bbbbbb;font-weight:400;">Text</div>
<div class="r" style="left:1711.5px;top:592.0px;width:120.5px;height:6.0px;background:#4a88c7;"></div>
<div class="r" style="left:1712.0px;top:596.5px;width:1160.0px;height:3.5px;background:#2f2f2f;"></div>
<div class="r" style="left:1714.0px;top:600.0px;width:1158.0px;height:48.0px;background:#3c3f41;"></div>
<div class="r" style="left:1711.5px;top:600.0px;width:2.5px;height:996.0px;background:#343638;"></div>
<div class="r" style="left:1714.0px;top:647.5px;width:1158.0px;height:2.5px;background:#2f2f2f;"></div>
<svg class="r" style="left:1728px;top:612px;" width="24" height="24" viewBox="0 0 24 24"><path d="M12 2 V22.5 M1.8 12.2 H22.2" stroke="#afb1b3" stroke-width="4"/></svg>
<div class="r" style="left:1782.0px;top:621.6px;width:20.0px;height:4.7px;background:#afb1b3;"></div>
<svg class="r" style="left:1828px;top:610px;" width="34" height="32" viewBox="0 0 34 32"><path d="M3 13 Q8 3.5 16 3.5 Q24 3.5 29.5 12" stroke="#6b6d6f" stroke-width="4.6" fill="none"/><path d="M3 13 Q7 21 14 22.5" stroke="#6b6d6f" stroke-width="4.6" fill="none"/><path d="M11 13.5 A5 5 0 0 1 20.5 12" stroke="#6b6d6f" stroke-width="4.4" fill="none"/><rect x="18" y="14" width="14.3" height="16.2" fill="#6b6d6f"/><rect x="21" y="19.5" width="8.3" height="2.4" fill="#3c3f41"/><rect x="21" y="24" width="8.3" height="2.4" fill="#3c3f41"/></svg>
<svg class="r" style="left:1883px;top:608.5px;" width="26" height="32" viewBox="0 0 26 32"><rect x="11.3" y="0.5" width="4" height="12" rx="2" fill="#ff2a55"/><rect x="5.5" y="10.5" width="16" height="4.5" rx="1" fill="#ff2a55"/><path d="M6 16.5 H21.5 L22.5 30 H20.5 L19.5 25 L18.5 30 H16 L15.5 25 L14.5 30 H12 L11.5 25 L10.5 30 H1 Q5 24 6 16.5Z" fill="#ff2a55"/></svg>
<div class="r" style="left:1714.0px;top:650.0px;width:1158.0px;height:48.0px;background:#45494a;"></div>
<div class="r" style="left:1714.0px;top:650.0px;width:58.0px;height:48.0px;background:#3f4244;"></div>
<div class="r" style="left:1714.0px;top:697.5px;width:1158.0px;height:2.0px;background:#2f3133;"></div>
<div class="r" style="left:1772.5px;top:653.0px;width:2.0px;height:42.0px;background:#2f3133;"></div>
<div class="r" style="left:1904.5px;top:653.0px;width:2.0px;height:42.0px;background:#2f3133;"></div>
<div class="r" style="left:2174.0px;top:653.0px;width:2.0px;height:42.0px;background:#2f3133;"></div>
<div class="r" style="left:2549.5px;top:653.0px;width:2.0px;height:42.0px;background:#2f3133;"></div>
<svg class="r" style="left:1719px;top:659px;" width="29" height="29" viewBox="0 0 29 29"><rect x="1.2" y="1.2" width="26.6" height="26.6" rx="5" fill="#43494a" stroke="#6b6b6b" stroke-width="2.2"/><path d="M6.5 15 L11.8 20.5 L22 8.5" stroke="#b7b7b7" stroke-width="3.6" fill="none"/></svg>
<div class="t" style="left:1788.0px;top:664.2px;font-size:22.5px;color:#bbbbbb;font-weight:400;">Type</div>
<div class="t" style="left:1919.5px;top:664.2px;font-size:22.5px;color:#bbbbbb;font-weight:400;">Key</div>
<div class="t" style="left:2189.5px;top:664.2px;font-size:22.5px;color:#bbbbbb;font-weight:400;">Value</div>
<div class="t" style="left:2565.5px;top:664.2px;font-size:22.5px;color:#bbbbbb;font-weight:400;">Description</div>
<div class="r" style="left:1714.0px;top:699.5px;width:1158.0px;height:39.5px;background:#3c3f41;"></div>
<div class="r" style="left:1714.0px;top:738.5px;width:1158.0px;height:1.6px;background:#4f5254;"></div>
<svg class="r" style="left:1719px;top:704px;" width="29" height="29" viewBox="0 0 29 29"><rect x="1.2" y="1.2" width="26.6" height="26.6" rx="5" fill="#43494a" stroke="#6b6b6b" stroke-width="2.2"/><path d="M6.5 15 L11.8 20.5 L22 8.5" stroke="#b7b7b7" stroke-width="3.6" fill="none"/></svg>
<svg class="r" style="left:1788px;top:704px;" width="36" height="30" viewBox="0 0 36 30"><g fill="#8f8f8f"><rect x="2" y="1" width="2.4" height="26"/><rect x="2" y="25.4" width="3.4" height="1.6"/><rect x="31.6" y="1" width="2.4" height="26"/><rect x="30.6" y="25.4" width="3.4" height="1.6"/><rect x="5.8" y="4.9" width="4" height="16.1" rx="2"/><path d="M11.8 4.9 H20.2 V14 H15.4 V17 H20.2 V21 H11.8 V11.6 H16.6 V8.6 H11.8Z"/><path d="M21.7 4.9 H30.1 V21 H21.7 V17 H26.3 V14.6 H23.5 V11.4 H26.3 V8.6 H21.7Z"/></g></svg>
<svg class="r" style="left:1864.0px;top:715.5px" width="18" height="10" viewBox="0 0 18 10"><path d="M0 0H18L9.0 10Z" fill="#a0a0a0"/></svg>
<div class="t" style="left:1915.5px;top:708.8px;font-size:26px;color:#bbbbbb;font-weight:400;">a</div>
<div class="r" style="left:1714.0px;top:740.0px;width:1158.0px;height:39.5px;background:#3c3f41;"></div>
<div class="r" style="left:1714.0px;top:779.0px;width:1158.0px;height:1.6px;background:#4f5254;"></div>
<svg class="r" style="left:1719px;top:744px;" width="29" height="29" viewBox="0 0 29 29"><rect x="1.2" y="1.2" width="26.6" height="26.6" rx="5" fill="#43494a" stroke="#6b6b6b" stroke-width="2.2"/><path d="M6.5 15 L11.8 20.5 L22 8.5" stroke="#b7b7b7" stroke-width="3.6" fill="none"/></svg>
<svg class="r" style="left:1788px;top:745px;" width="36" height="30" viewBox="0 0 36 30"><g fill="#8f8f8f"><rect x="2" y="1" width="2.4" height="26"/><rect x="2" y="25.4" width="3.4" height="1.6"/><rect x="31.6" y="1" width="2.4" height="26"/><rect x="30.6" y="25.4" width="3.4" height="1.6"/><rect x="5.8" y="4.9" width="4" height="16.1" rx="2"/><path d="M11.8 4.9 H20.2 V14 H15.4 V17 H20.2 V21 H11.8 V11.6 H16.6 V8.6 H11.8Z"/><path d="M21.7 4.9 H30.1 V21 H21.7 V17 H26.3 V14.6 H23.5 V11.4 H26.3 V8.6 H21.7Z"/></g></svg>
<svg class="r" style="left:1864.0px;top:756.0px" width="18" height="10" viewBox="0 0 18 10"><path d="M0 0H18L9.0 10Z" fill="#a0a0a0"/></svg>
<div class="t" style="left:1915.5px;top:749.3px;font-size:26px;color:#bbbbbb;font-weight:400;">b</div>
<div class="r" style="left:1714.0px;top:780.5px;width:1158.0px;height:39.5px;background:#3c3f41;"></div>
<div class="r" style="left:1714.0px;top:819.5px;width:1158.0px;height:1.6px;background:#4f5254;"></div>
<svg class="r" style="left:1719px;top:785px;" width="29" height="29" viewBox="0 0 29 29"><rect x="1.2" y="1.2" width="26.6" height="26.6" rx="5" fill="#43494a" stroke="#6b6b6b" stroke-width="2.2"/><path d="M6.5 15 L11.8 20.5 L22 8.5" stroke="#b7b7b7" stroke-width="3.6" fill="none"/></svg>
<svg class="r" style="left:1788px;top:785px;" width="36" height="30" viewBox="0 0 36 30"><g fill="#8f8f8f"><rect x="2" y="1" width="2.4" height="26"/><rect x="2" y="25.4" width="3.4" height="1.6"/><rect x="31.6" y="1" width="2.4" height="26"/><rect x="30.6" y="25.4" width="3.4" height="1.6"/><rect x="5.8" y="4.9" width="4" height="16.1" rx="2"/><path d="M11.8 4.9 H20.2 V14 H15.4 V17 H20.2 V21 H11.8 V11.6 H16.6 V8.6 H11.8Z"/><path d="M21.7 4.9 H30.1 V21 H21.7 V17 H26.3 V14.6 H23.5 V11.4 H26.3 V8.6 H21.7Z"/></g></svg>
<svg class="r" style="left:1864.0px;top:796.5px" width="18" height="10" viewBox="0 0 18 10"><path d="M0 0H18L9.0 10Z" fill="#a0a0a0"/></svg>
<div class="t" style="left:1915.5px;top:789.8px;font-size:26px;color:#bbbbbb;font-weight:400;">c</div>
<div class="r" style="left:1770.5px;top:699.5px;width:1.6px;height:120.0px;background:#4f5254;"></div>
<div class="r" style="left:1902.5px;top:699.5px;width:1.6px;height:120.0px;background:#4f5254;"></div>
<div class="r" style="left:2172.5px;top:699.5px;width:1.6px;height:120.0px;background:#4f5254;"></div>
<div class="r" style="left:2548.5px;top:699.5px;width:1.6px;height:120.0px;background:#4f5254;"></div>
<div class="r" style="left:2174.0px;top:699.5px;width:374.5px;height:38.5px;background:#2f65ca;"></div>
<div class="r" style="left:2550.0px;top:699.5px;width:320.0px;height:38.5px;background:#2f65ca;"></div>
<div class="t" style="left:2180.5px;top:706.2px;font-size:27px;color:#ffffff;font-weight:400;">1</div>
<div class="t" style="left:2180.5px;top:746.8px;font-size:27px;color:#bbbbbb;font-weight:400;">2</div>
<div class="r" style="left:2174.0px;top:780.5px;width:374.5px;height:38.5px;background:#2f65ca;border:2px solid #6ab4f7;box-sizing:border-box"></div>
<div class="r" style="left:2550.0px;top:780.5px;width:320.0px;height:38.5px;background:#2f65ca;"></div>
<div class="t" style="left:2180.5px;top:787.2px;font-size:27px;color:#ffffff;font-weight:400;">3</div>
<div class="r" style="left:2870.0px;top:600.0px;width:2.0px;height:996.0px;background:#343638;"></div>
<div class="r" style="left:2093.0px;top:580.5px;width:199.0px;height:60.5px;background:transparent;border:2px solid #1d7d3c;box-sizing:border-box"></div>
<div class="t" style="left:2108.0px;top:595.1px;font-size:36px;color:#00a848;font-weight:400;">Click clear</div>
<div class="r" style="left:1956.0px;top:630.3px;width:137.0px;height:2.0px;background:#1d7d3c;"></div>
<div class="r" style="left:1909.4px;top:608.0px;width:46.6px;height:46.6px;background:#00a848;border-radius:50%"></div>
<div class="t" style="left:1909.4px;top:614px;width:46.6px;text-align:center;font-size:32px;color:#fff">2</div>
<div class="r" style="left:2036.3px;top:992.0px;width:261.0px;height:61.5px;background:transparent;border:2px solid #1d7d3c;box-sizing:border-box"></div>
<div class="r" style="left:2048.5px;top:1003.5px;width:4.0px;height:41.5px;background:#555759;"></div>
<div class="t" style="left:2051.0px;top:1006.6px;font-size:36px;color:#00a848;font-weight:400;">Select column</div>
<div class="r" style="left:2160.0px;top:956.0px;width:2.0px;height:36.0px;background:#1d7d3c;"></div>
<svg class="r" style="left:2140px;top:725px;" width="130" height="215" viewBox="0 0 130 215"><g fill="#00a848">
<path d="M11.5 182.1 L22.4 183.8 L52 36 L44 35Z"/>
<path d="M54.4 9.6 L33.6 34.2 L63.4 39.6Z"/>
<path d="M38.8 177.5 L45.6 181.6 L107 114 L99.5 108Z"/>
<path d="M119.4 90.1 L90.7 102.4 L113.9 120.2Z"/>
</g></svg>
<div class="r" style="left:2137.8px;top:910.1px;width:46.4px;height:46.4px;background:#00a848;border-radius:50%"></div>
<div class="t" style="left:2137.8px;top:916.5px;width:46.4px;text-align:center;font-size:32px;color:#fff">1</div>
</div></body></html>
